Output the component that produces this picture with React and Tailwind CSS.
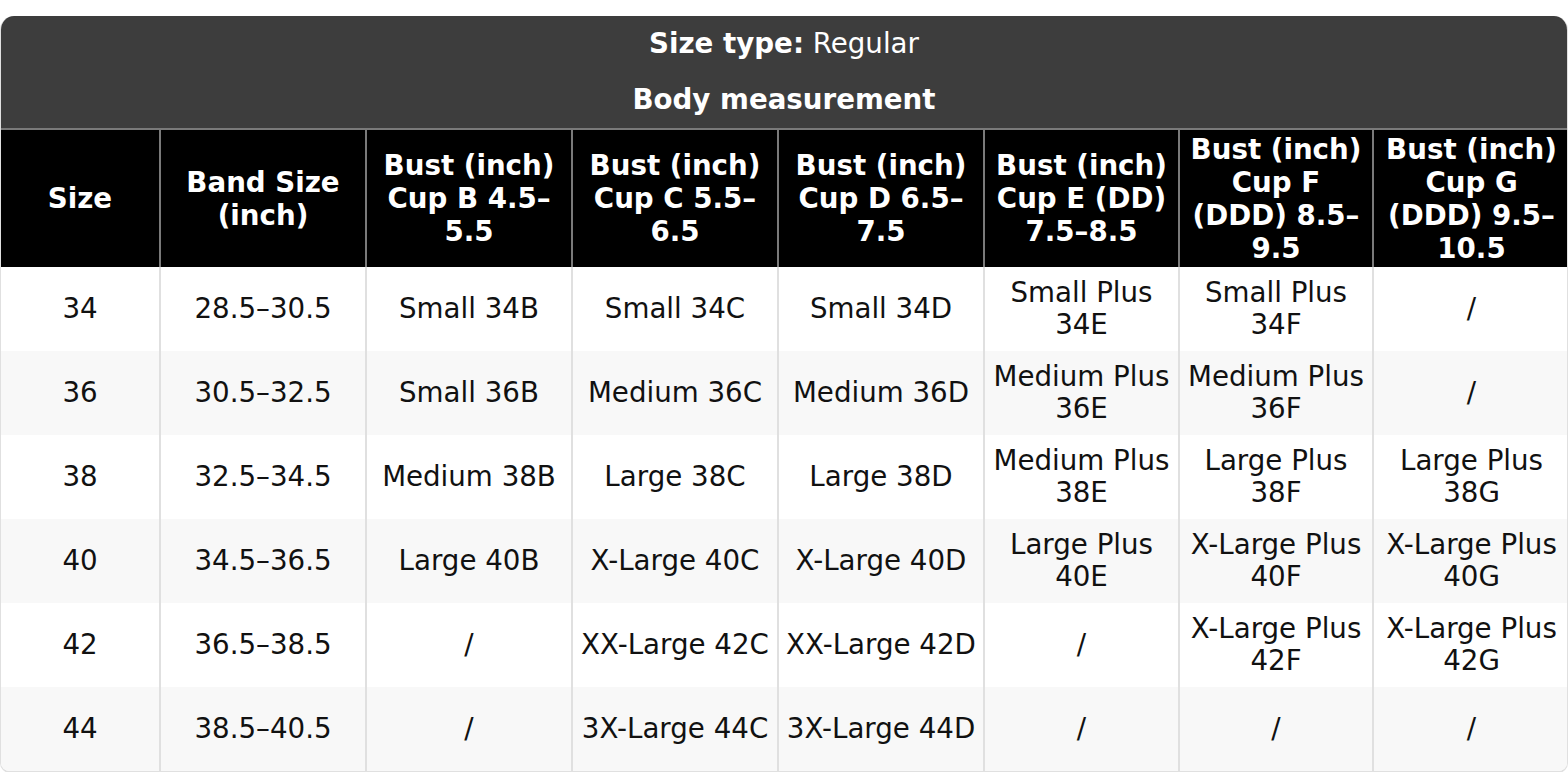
import React from "react";

const cols = [159, 206, 206, 206, 206, 195, 194, 196];

const heads = [
  ["Size"],
  ["Band Size", "(inch)"],
  ["Bust (inch)", "Cup B 4.5–", "5.5"],
  ["Bust (inch)", "Cup C 5.5–", "6.5"],
  ["Bust (inch)", "Cup D 6.5–", "7.5"],
  ["Bust (inch)", "Cup E (DD)", "7.5–8.5"],
  ["Bust (inch)", "Cup F", "(DDD) 8.5–", "9.5"],
  ["Bust (inch)", "Cup G", "(DDD) 9.5–", "10.5"],
];

const rows = [
  ["34", "28.5–30.5", "Small 34B", "Small 34C", "Small 34D", ["Small Plus", "34E"], ["Small Plus", "34F"], "/"],
  ["36", "30.5–32.5", "Small 36B", "Medium 36C", "Medium 36D", ["Medium Plus", "36E"], ["Medium Plus", "36F"], "/"],
  ["38", "32.5–34.5", "Medium 38B", "Large 38C", "Large 38D", ["Medium Plus", "38E"], ["Large Plus", "38F"], ["Large Plus", "38G"]],
  ["40", "34.5–36.5", "Large 40B", "X-Large 40C", "X-Large 40D", ["Large Plus", "40E"], ["X-Large Plus", "40F"], ["X-Large Plus", "40G"]],
  ["42", "36.5–38.5", "/", "XX-Large 42C", "XX-Large 42D", "/", ["X-Large Plus", "42F"], ["X-Large Plus", "42G"]],
  ["44", "38.5–40.5", "/", "3X-Large 44C", "3X-Large 44D", "/", "/", "/"],
];

function Lines({ v }) {
  const parts = Array.isArray(v) ? v : [v];
  return parts.map((p, i) => (
    <div key={i} className="whitespace-nowrap">{p}</div>
  ));
}

export default function App() {
  return (
    <div className="bg-white w-[1568px] h-[772px] pt-[16px] font-['DejaVu_Sans',sans-serif]">
      <div className="rounded-t-[14px] rounded-b-[10px] overflow-hidden border-b-2 border-x border-[#e0e0e0] w-[1568px]">
        <div className="bg-[#3d3d3d] text-white text-center text-[27.7px] h-[112px] flex flex-col">
          <div className="h-[56px] flex items-center justify-center pt-[0px]">
            <span className="font-bold">Size type:</span>&nbsp;Regular
          </div>
          <div className="h-[56px] flex items-center justify-center font-bold">Body measurement</div>
        </div>
        <table className="table-fixed border-collapse w-full text-[27.7px]">
          <colgroup>
            {cols.map((w, i) => (
              <col key={i} style={{ width: w }} />
            ))}
          </colgroup>
          <thead>
            <tr className="bg-black text-white h-[138px]">
              {heads.map((h, i) => (
                <th key={i} className="border-x-2 border-t-2 border-[#7a7a7a] first:border-l-0 last:border-r-0 font-bold leading-[33px] px-1 align-middle">
                  <Lines v={h} />
                </th>
              ))}
            </tr>
          </thead>
          <tbody>
            {rows.map((r, ri) => (
              <tr key={ri} className={ri % 2 ? "bg-[#f8f8f8] h-[84px]" : "bg-white h-[84px]"}>
                {r.map((c, ci) => (
                  <td key={ci} className="border-x-2 border-[#e0e0e0] first:border-l-0 last:border-r-0 text-center text-[#111] leading-[32px] px-1 align-middle">
                    <Lines v={c} />
                  </td>
                ))}
              </tr>
            ))}
          </tbody>
        </table>
      </div>
    </div>
  );
}
